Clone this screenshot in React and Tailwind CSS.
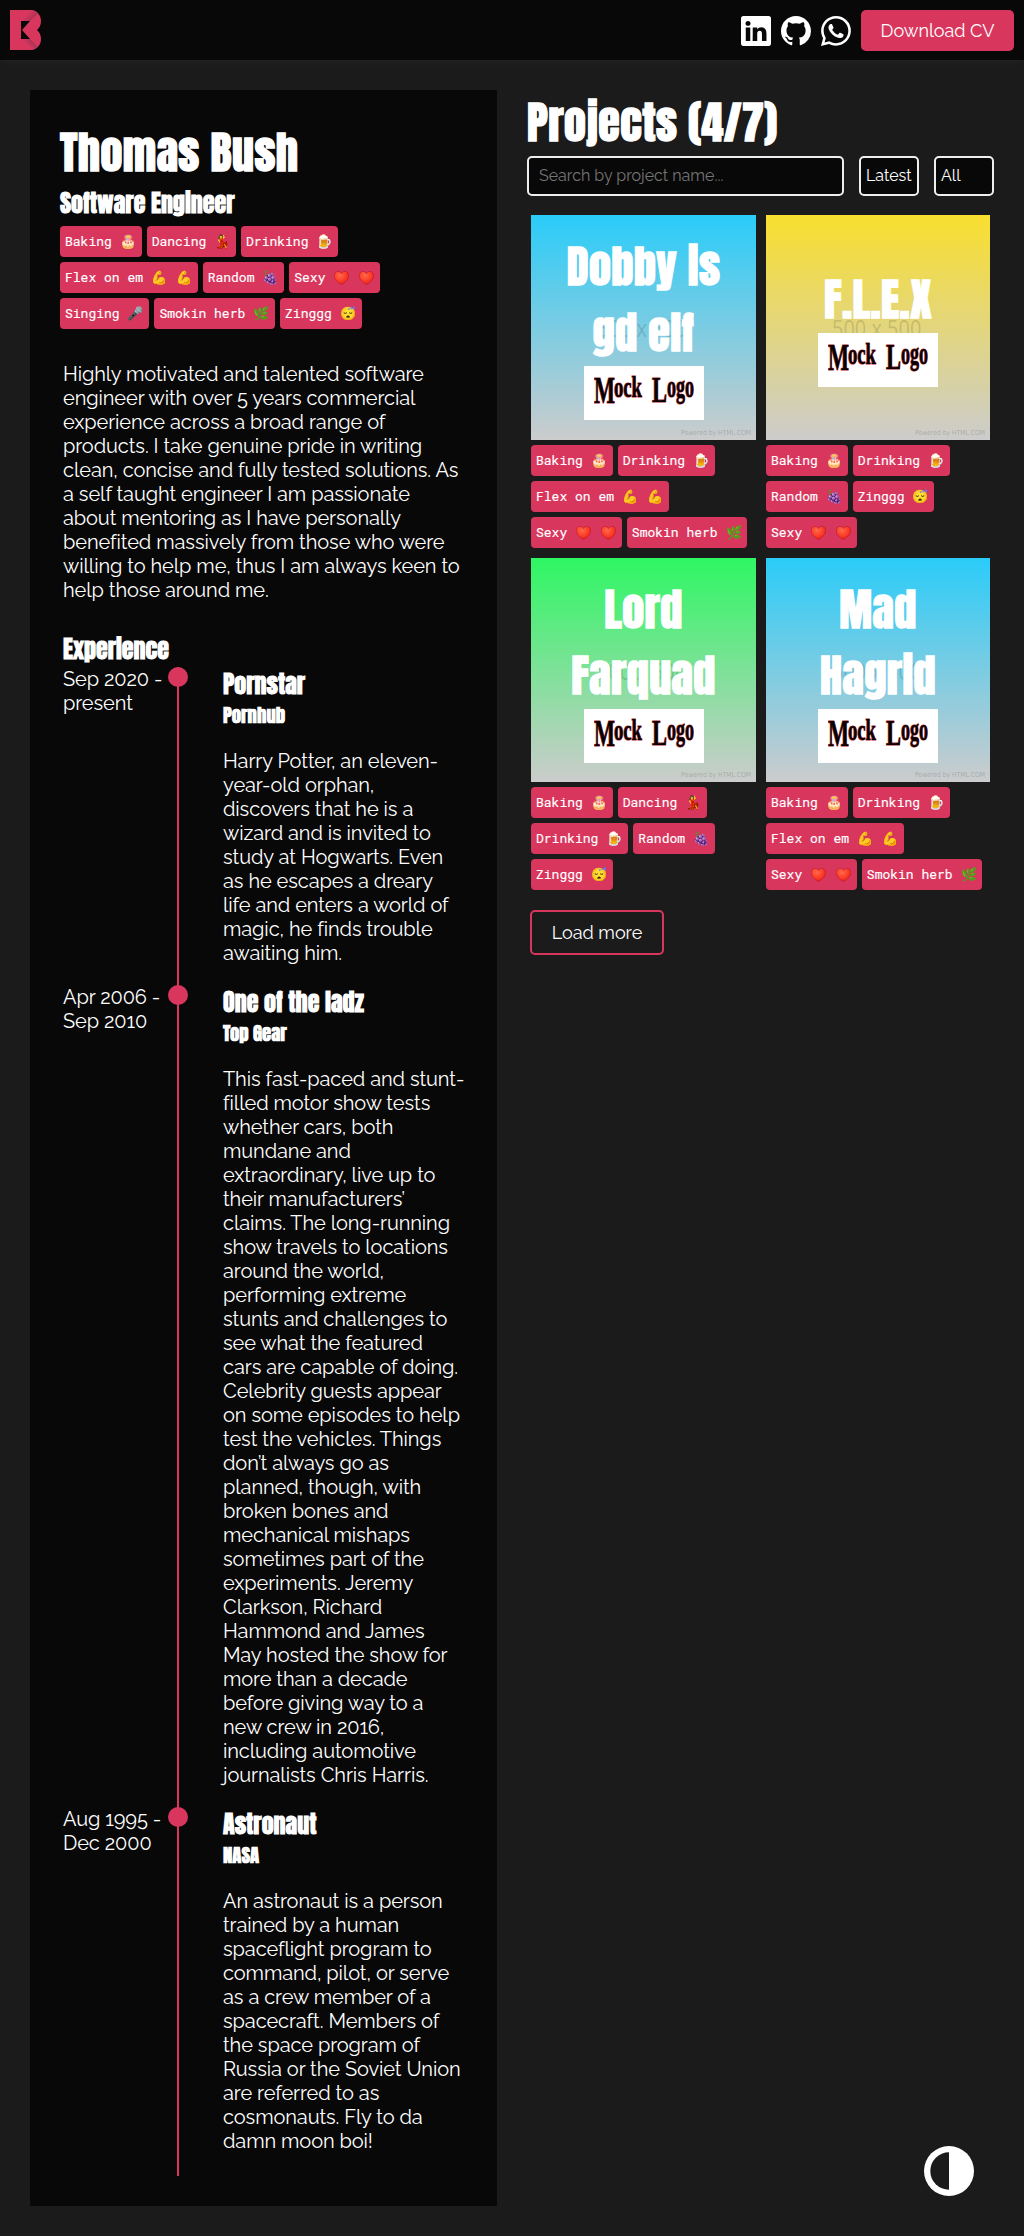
import React, { useLayoutEffect, useRef, useState } from "react";
import { BsLinkedin, BsGithub, BsWhatsapp } from "react-icons/bs";

/* A single line of text, stretched or condensed to the given width. */
function Fit({ w, children }) {
  const ref = useRef(null);
  const [scale, setScale] = useState(1);
  useLayoutEffect(() => {
    const natural = ref.current.offsetWidth;
    if (natural) setScale(w / natural);
  }, [w]);
  return (
    <span className="block" style={{ width: w }}>
      <span
        ref={ref}
        className="inline-block origin-left whitespace-nowrap align-top"
        style={{ transform: `scaleX(${scale})` }}
      >
        {children}
      </span>
    </span>
  );
}

const display = "whitespace-nowrap font-['Anton',Impact,sans-serif] font-bold text-white";
const large =
  "whitespace-nowrap font-['Anton',Impact,sans-serif] font-normal text-white text-[44px] tracking-[0.45px] [-webkit-text-stroke:1.3px_white]";

function Heart() {
  return (
    <svg width="15" height="14" viewBox="0 0 15 14" className="self-center">
      <defs>
        <radialGradient id="heart" cx="0.4" cy="0.3" r="0.75">
          <stop offset="0" stopColor="#ff6a4d" />
          <stop offset="0.6" stopColor="#fb3a24" />
          <stop offset="1" stopColor="#d81e1a" />
        </radialGradient>
      </defs>
      <path
        fill="url(#heart)"
        stroke="#b5142a"
        strokeWidth="0.5"
        d="M7.500 13.700C4.500 12 0.300 8.500 0.300 4.500C0.300 2 2 0.400 4 0.400C5.500 0.400 6.800 1.200 7.500 2.600C8.200 1.200 9.500 0.400 11 0.400C13 0.400 14.700 2 14.700 4.500C14.700 8.500 10.500 12 7.500 13.700Z"
      />
    </svg>
  );
}

const EMOJI = {
  Baking: ["🎂"],
  Dancing: ["💃"],
  Drinking: ["🍺"],
  "Flex on em": ["💪", "💪"],
  Random: ["🍇"],
  Sexy: [<Heart />, <Heart />],
  Singing: ["🎤"],
  "Smokin herb": ["🌿"],
  Zinggg: ["😴"],
};

function Tags({ names }) {
  return (
    <div className="flex flex-wrap gap-[5px]">
      {names.map((n) => (
        <span
          key={n}
          className="block h-[31px] whitespace-pre rounded-[4px] bg-[#d9365e] px-[5px] font-['Roboto_Mono','DejaVu_Sans_Mono',monospace] text-[13px] font-normal leading-[31px] text-white [-webkit-text-stroke:0.15px_white]"
        >
          {n}
          {EMOJI[n].map((e, i) => (
            <React.Fragment key={i}>
              {" "}
              <span className="inline-flex h-[31px] w-[17px] justify-center align-top font-['Noto_Color_Emoji',sans-serif] text-[13px]">
                {e}
              </span>
            </React.Fragment>
          ))}
        </span>
      ))}
    </div>
  );
}

function Lines({ lines }) {
  return (
    <p className="text-[20px] leading-[24px] tracking-[-0.09px]">
      {lines.map((t) => (
        <span key={t} className="block whitespace-nowrap">
          {t}
        </span>
      ))}
    </p>
  );
}

const BIO = [
  "Highly motivated and talented software",
  "engineer with over 5 years commercial",
  "experience across a broad range of",
  "products. I take genuine pride in writing",
  "clean, concise and fully tested solutions. As",
  "a self taught engineer I am passionate",
  "about mentoring as I have personally",
  "benefited massively from those who were",
  "willing to help me, thus I am always keen to",
  "help those around me.",
];

const JOBS = [
  {
    dates: ["Sep 2020 -", "present"],
    title: "Pornstar",
    company: "Pornhub",
    pad: "pb-5",
    lines: [
      "Harry Potter, an eleven-",
      "year-old orphan,",
      "discovers that he is a",
      "wizard and is invited to",
      "study at Hogwarts. Even",
      "as he escapes a dreary",
      "life and enters a world of",
      "magic, he finds trouble",
      "awaiting him.",
    ],
  },
  {
    dates: ["Apr 2006 -", "Sep 2010"],
    title: "One of the ladz",
    company: "Top Gear",
    pad: "pb-5",
    lines: [
      "This fast-paced and stunt-",
      "filled motor show tests",
      "whether cars, both",
      "mundane and",
      "extraordinary, live up to",
      "their manufacturers’",
      "claims. The long-running",
      "show travels to locations",
      "around the world,",
      "performing extreme",
      "stunts and challenges to",
      "see what the featured",
      "cars are capable of doing.",
      "Celebrity guests appear",
      "on some episodes to help",
      "test the vehicles. Things",
      "don’t always go as",
      "planned, though, with",
      "broken bones and",
      "mechanical mishaps",
      "sometimes part of the",
      "experiments. Jeremy",
      "Clarkson, Richard",
      "Hammond and James",
      "May hosted the show for",
      "more than a decade",
      "before giving way to a",
      "new crew in 2016,",
      "including automotive",
      "journalists Chris Harris.",
    ],
  },
  {
    dates: ["Aug 1995 -", "Dec 2000"],
    title: "Astronaut",
    company: "NASA",
    pad: "pb-[23px]",
    lines: [
      "An astronaut is a person",
      "trained by a human",
      "spaceflight program to",
      "command, pilot, or serve",
      "as a crew member of a",
      "spacecraft. Members of",
      "the space program of",
      "Russia or the Soviet Union",
      "are referred to as",
      "cosmonauts. Fly to da",
      "damn moon boi!",
    ],
  },
];

function Job({ job }) {
  return (
    <div className="flex">
      <div className="w-[114px]">
        <Lines lines={job.dates} />
      </div>
      <div className="relative w-[2px] bg-[#d9365e]">
        <span className="absolute -left-[9px] top-0 size-5 rounded-full bg-[#d9365e]" />
      </div>
      <div className={"-mt-px ml-11 " + job.pad}>
        <h3 className={display + " text-[24px] leading-[36px]"}>{job.title}</h3>
        <h4 className={display + " -mt-px mb-5 text-[18.72px] leading-[28px]"}>{job.company}</h4>
        <Lines lines={job.lines} />
      </div>
    </div>
  );
}

const PROJECTS = [
  {
    title: ["Dobby is", "gd elf"],
    box: "w-[225px] h-[225px] pb-px from-[#2accf9]",
    tags: ["Baking", "Drinking", "Flex on em", "Sexy", "Smokin herb"],
  },
  {
    title: ["F.L.E.X"],
    box: "w-[224px] h-[225px] pb-px from-[#f9df2f]",
    tags: ["Baking", "Drinking", "Random", "Zinggg", "Sexy"],
  },
  {
    title: ["Lord", "Farquad"],
    box: "w-[225px] h-[224px] from-[#2ef763]",
    tags: ["Baking", "Dancing", "Drinking", "Random", "Zinggg"],
  },
  {
    title: ["Mad", "Hagrid"],
    box: "w-[224px] h-[224px] from-[#2accf9]",
    tags: ["Baking", "Drinking", "Flex on em", "Sexy", "Smokin herb"],
  },
];

function MockLogo() {
  return (
    <div className="relative flex h-[54px] w-[120px] justify-center bg-white">
      <svg width="100" height="44" viewBox="0 0 100 44" className="mt-1">
        <g
          fontFamily="Liberation Serif"
          fontWeight="bold"
          fill="#080000"
          stroke="#b3262d"
          strokeWidth="1.2"
          paintOrder="stroke"
        >
          <text x="0" y="33" fontSize="38" textLength="21" lengthAdjust="spacingAndGlyphs">M</text>
          <text x="20" y="27" fontSize="30" textLength="28" lengthAdjust="spacingAndGlyphs">ock</text>
          <text x="58" y="32" fontSize="36" textLength="15" lengthAdjust="spacingAndGlyphs">L</text>
          <text x="73" y="27" fontSize="31" textLength="27" lengthAdjust="spacingAndGlyphs">ogo</text>
        </g>
      </svg>
    </div>
  );
}

function Project({ p }) {
  return (
    <div>
      <div className={"relative flex flex-col items-center justify-center bg-linear-to-b/srgb to-[#cccccc] " + p.box}>
        <span className="absolute inset-x-0 top-[96px] flex justify-center pr-1 font-['Open_Sans',sans-serif] text-[24px] leading-[34px] text-black/15">
          <Fit w={89}>500 x 500</Fit>
        </span>
        <span className="absolute bottom-[2px] right-[5px] font-['DejaVu_Sans',sans-serif] text-[7px] leading-[9px] text-black/20">
          <Fit w={70}>Powered by HTML.COM</Fit>
        </span>
        <h2 className={large + " relative text-center leading-[64px]"}>
          {p.title.map((t) => (
            <span key={t} className="block pb-[2px]">
              {t}
            </span>
          ))}
        </h2>
        <MockLogo />
      </div>
      <div className="mt-[5px]">
        <Tags names={p.tags} />
      </div>
    </div>
  );
}

function Logo() {
  return (
    <svg width="31" height="40" viewBox="0 0 31 40">
      <defs>
        <linearGradient id="fold-top" x1="15" y1="7" x2="19.500" y2="11.500" gradientUnits="userSpaceOnUse">
          <stop offset="0" stopColor="#d9365e" />
          <stop offset="1" stopColor="#a83456" />
        </linearGradient>
        <linearGradient id="fold-bottom" x1="15" y1="33" x2="19.500" y2="28.500" gradientUnits="userSpaceOnUse">
          <stop offset="0" stopColor="#d9365e" />
          <stop offset="1" stopColor="#a83456" />
        </linearGradient>
      </defs>
      <path
        fill="#d9365e"
        fillRule="evenodd"
        d="M0 0H20C27 0 31 5 31 11C31 15 29.500 18 27 20C29.500 22 31 25 31 29C31 35 27 40 20 40H0ZM11 11V29H20L12 20L20 11Z"
      />
      <path fill="url(#fold-top)" d="M11 0H20C23.500 0 26 1.200 28 3.200L20 11H11Z" />
      <path fill="url(#fold-bottom)" d="M11 40H20C23.500 40 26 38.800 28 36.800L20 29H11Z" />
    </svg>
  );
}

const field = "flex h-10 items-center whitespace-nowrap rounded-[5px] border-2 border-[#eee] bg-[#080808]";

export default function App() {
  return (
    <div className="h-[2236px] w-[1024px] overflow-hidden bg-[#1b1b1b] font-['Raleway',Lato,sans-serif] text-white">
      <header className="flex h-[60px] items-start justify-between bg-[#080808] p-[10px] shadow-[0_0_10px_rgba(255,255,255,0.06)]">
        <Logo />
        <div className="flex items-center gap-[10px] text-white">
          <BsLinkedin size={30} />
          <BsGithub size={30} />
          <BsWhatsapp size={30} />
          <button className="flex h-[41px] w-[153px] items-center justify-center whitespace-nowrap rounded-[5px] bg-[#d9365e] text-[18px]">
            Download CV
          </button>
        </div>
      </header>

      <div className="flex pl-[30px] pt-[30px]">
        <main className="h-[2116px] w-[467px] bg-[#080808] pl-[30px] pt-[30px]">
          <h1 className={large + " pb-[2px] leading-[64px]"}>Thomas Bush</h1>
          <h2 className={display + " -mt-px mb-[5px] text-[24px] leading-[36px]"}>Software Engineer</h2>
          <div className="w-[340px]">
            <Tags
              names={["Baking", "Dancing", "Drinking", "Flex on em", "Random", "Sexy", "Singing", "Smokin herb", "Zinggg"]}
            />
          </div>
          <div className="pl-[3px] pt-[33px]">
            <Lines lines={BIO} />
            <h2 className={display + " mt-[29px] text-[24px] leading-[36px]"}>Experience</h2>
            {JOBS.map((j) => (
              <Job key={j.title} job={j} />
            ))}
          </div>
        </main>

        <section className="ml-[30px]">
          <h1 className={large + " pb-[2px] leading-[64px]"}>Projects (4/7)</h1>
          <div className="flex gap-[15px] text-[16px]">
            <div className={field + " w-[317px] pl-[10px] text-[#757575]"}>Search by project name...</div>
            <div className={field + " w-[60px] pl-[5px] text-white"}>Latest</div>
            <div className={field + " w-[60px] pl-[5px] text-white"}>All</div>
          </div>
          <div className="ml-1 mt-[19px] grid grid-cols-[225px_224px] gap-[10px]">
            {PROJECTS.map((p) => (
              <Project key={p.title[0]} p={p} />
            ))}
          </div>
          <button className="ml-[3px] mt-5 flex h-[45px] w-[134px] items-center justify-center whitespace-nowrap rounded-[5px] border-2 border-[#d9365e] text-[18px]">
            Load more
          </button>
        </section>
      </div>

      <button className="fixed left-[924px] top-[2146px] size-[50px]">
        <svg width="50" height="50" viewBox="0 0 50 50">
          <circle cx="25" cy="25" r="25" fill="#fff" />
          <path d="M25 6.300A18.700 18.700 0 0 0 25 43.700Z" fill="#1b1b1b" />
        </svg>
      </button>
    </div>
  );
}
